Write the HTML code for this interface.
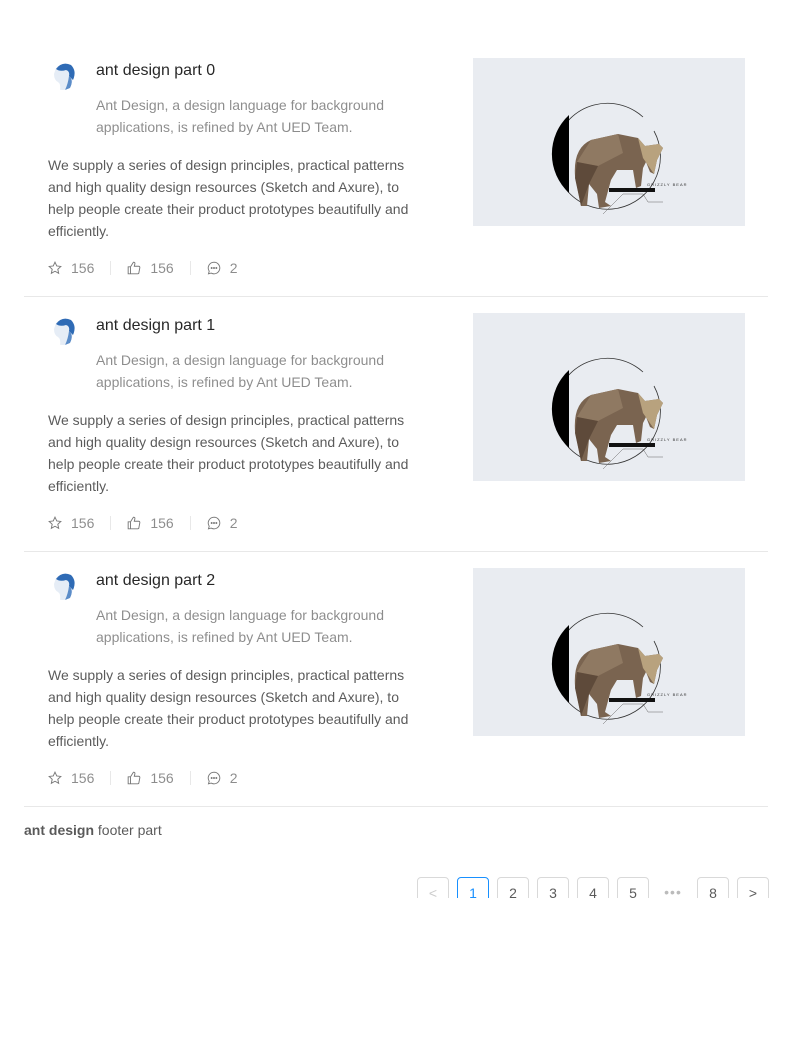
<!DOCTYPE html>
<html><head><meta charset="utf-8"><style>
*{margin:0;padding:0;box-sizing:border-box}
body{width:793px;height:1059px;background:#fff;font-family:"Liberation Sans",Helvetica,Arial,sans-serif;color:rgba(0,0,0,.65);font-size:14px;position:relative;overflow:hidden}
.item{position:absolute;left:24px;width:744px;height:255px;border-bottom:1px solid #e8e8e8}
.av{position:absolute;left:24px;top:18px;width:30px;height:30px;border-radius:50%;overflow:hidden;background:#fff}
.title{position:absolute;left:72px;top:17px;font-size:16px;color:rgba(0,0,0,.85);line-height:24px}
.desc{position:absolute;left:72px;top:52px;width:320px;color:rgba(0,0,0,.45);line-height:22px}
.content{position:absolute;left:24px;top:112px;width:370px;line-height:22px}
.acts{position:absolute;left:24px;top:215px;display:flex;align-items:center;color:rgba(0,0,0,.45);line-height:22px}
.acts span{display:flex;align-items:center;gap:9px}
.sep{width:1px;height:14px;background:#e8e8e8;margin:0 16px}
.img{position:absolute;left:449px;top:16px;width:272px;height:168px;background:#e9ecf1}
.footer{position:absolute;left:24px;top:819px;line-height:22px}
.pg{position:absolute;top:877px;height:21px;overflow:hidden;display:flex;gap:8px;left:417px}
.pg div{width:32px;height:32px;border:1px solid #d9d9d9;border-radius:4px;text-align:center;line-height:30px;color:rgba(0,0,0,.65)}
.pg .on{border-color:#1890ff;color:#1890ff}
.pg .dots{border:none;color:#bbb;letter-spacing:1px}
</style></head><body>
<svg width="0" height="0" style="position:absolute"><defs>
<g id="bear">
<path d="M181 73 A53 53 0 1 1 170 59" fill="none" stroke="#333" stroke-width="0.8"/>
<path d="M96 57 A53 53 0 0 0 96 135 Z" fill="#000"/>
<path d="M102 118 Q100 90 118 82 L145 76 L165 80 L172 88 L186 86 L190 90 L184 102 L181 116 L177 114 L173 104 L170 110 L168 128 L163 130 L160 112 L144 112 L138 122 L132 144 L138 148 L126 150 L124 136 L116 126 L114 148 L108 148 Z" fill="#7a6450"/>
<path d="M165 80 L172 88 L186 86 L190 90 L184 102 L181 116 L170 100 Z" fill="#b8a27e"/>
<path d="M118 82 L145 76 L150 95 L125 108 L104 104 Z" fill="#8f7962"/>
<path d="M104 104 L125 108 L116 126 L108 148 L102 120Z" fill="#5e4a3a"/>
<rect x="136" y="130" width="46" height="4" fill="#111"/>
<text x="174" y="128" font-size="4" fill="#333" font-family="Liberation Sans" letter-spacing="1">GRIZZLY BEAR</text>
<path d="M130 156 L150 136 L170 136 L175 144 L190 144" fill="none" stroke="#666" stroke-width="0.5"/>
</g>
<g id="face">
<rect width="30" height="30" fill="#fff"/>
<path d="M8 8 Q14 2 22 5 Q28 10 25 18 Q24 26 18 30 L12 30 Q13 24 10 22 Q6 20 6 14 Z" fill="#e6edf6"/>
<path d="M8 9 Q14 1 23 5 Q29 11 25 20 L21 16 Q22 11 18 10 Q12 12 8 9Z" fill="#2f6bb5"/>
<path d="M21 16 Q26 20 22 28 L17 30 Q20 24 21 16Z" fill="#5b8cc8"/>
</g></defs></svg>

<div class="item" style="top:42px">
<div class="av"><svg width="30" height="30"><use href="#face"/></svg></div><div class="title">ant design part 0</div>
<div class="desc">Ant Design, a design language for background applications, is refined by Ant UED Team.</div>
<div class="content">We supply a series of design principles, practical patterns and high quality design resources (Sketch and Axure), to help people create their product prototypes beautifully and efficiently.</div>
<div class="acts"><span><svg width="14" height="14" viewBox="0 0 24 24" fill="none" stroke="#777" stroke-width="1.6"><path d="M12 2l3 6.5 7 .8-5.2 4.8 1.5 7L12 17.6 5.7 21.1l1.5-7L2 9.3l7-.8z"/></svg>156</span><i class="sep"></i><span><svg width="14" height="14" viewBox="0 0 24 24" fill="none" stroke="#777" stroke-width="1.6"><path d="M2 10h4v12H2zM6 10l5-8c2 0 3 1 2.5 3L12.5 9H20a2 2 0 0 1 2 2.4l-1.6 8.6A2 2 0 0 1 18.4 22H6"/></svg>156</span><i class="sep"></i><span><svg width="14" height="14" viewBox="0 0 24 24" fill="none" stroke="#777" stroke-width="1.6"><path d="M12 2a10 10 0 1 1-5 18.7L2.5 22l1.3-4.5A10 10 0 0 1 12 2z"/><circle cx="8" cy="12" r=".9" fill="#777"/><circle cx="12" cy="12" r=".9" fill="#777"/><circle cx="16" cy="12" r=".9" fill="#777"/></svg>2</span></div>
<div class="img"><svg width="272" height="168"><use href="#bear"/></svg></div>
</div>

<div class="item" style="top:297px">
<div class="av"><svg width="30" height="30"><use href="#face"/></svg></div><div class="title">ant design part 1</div>
<div class="desc">Ant Design, a design language for background applications, is refined by Ant UED Team.</div>
<div class="content">We supply a series of design principles, practical patterns and high quality design resources (Sketch and Axure), to help people create their product prototypes beautifully and efficiently.</div>
<div class="acts"><span><svg width="14" height="14" viewBox="0 0 24 24" fill="none" stroke="#777" stroke-width="1.6"><path d="M12 2l3 6.5 7 .8-5.2 4.8 1.5 7L12 17.6 5.7 21.1l1.5-7L2 9.3l7-.8z"/></svg>156</span><i class="sep"></i><span><svg width="14" height="14" viewBox="0 0 24 24" fill="none" stroke="#777" stroke-width="1.6"><path d="M2 10h4v12H2zM6 10l5-8c2 0 3 1 2.5 3L12.5 9H20a2 2 0 0 1 2 2.4l-1.6 8.6A2 2 0 0 1 18.4 22H6"/></svg>156</span><i class="sep"></i><span><svg width="14" height="14" viewBox="0 0 24 24" fill="none" stroke="#777" stroke-width="1.6"><path d="M12 2a10 10 0 1 1-5 18.7L2.5 22l1.3-4.5A10 10 0 0 1 12 2z"/><circle cx="8" cy="12" r=".9" fill="#777"/><circle cx="12" cy="12" r=".9" fill="#777"/><circle cx="16" cy="12" r=".9" fill="#777"/></svg>2</span></div>
<div class="img"><svg width="272" height="168"><use href="#bear"/></svg></div>
</div>

<div class="item" style="top:552px">
<div class="av"><svg width="30" height="30"><use href="#face"/></svg></div><div class="title">ant design part 2</div>
<div class="desc">Ant Design, a design language for background applications, is refined by Ant UED Team.</div>
<div class="content">We supply a series of design principles, practical patterns and high quality design resources (Sketch and Axure), to help people create their product prototypes beautifully and efficiently.</div>
<div class="acts"><span><svg width="14" height="14" viewBox="0 0 24 24" fill="none" stroke="#777" stroke-width="1.6"><path d="M12 2l3 6.5 7 .8-5.2 4.8 1.5 7L12 17.6 5.7 21.1l1.5-7L2 9.3l7-.8z"/></svg>156</span><i class="sep"></i><span><svg width="14" height="14" viewBox="0 0 24 24" fill="none" stroke="#777" stroke-width="1.6"><path d="M2 10h4v12H2zM6 10l5-8c2 0 3 1 2.5 3L12.5 9H20a2 2 0 0 1 2 2.4l-1.6 8.6A2 2 0 0 1 18.4 22H6"/></svg>156</span><i class="sep"></i><span><svg width="14" height="14" viewBox="0 0 24 24" fill="none" stroke="#777" stroke-width="1.6"><path d="M12 2a10 10 0 1 1-5 18.7L2.5 22l1.3-4.5A10 10 0 0 1 12 2z"/><circle cx="8" cy="12" r=".9" fill="#777"/><circle cx="12" cy="12" r=".9" fill="#777"/><circle cx="16" cy="12" r=".9" fill="#777"/></svg>2</span></div>
<div class="img"><svg width="272" height="168"><use href="#bear"/></svg></div>
</div>

<div class="footer"><b>ant design</b> footer part</div>
<div class="pg"><div style="color:#ccc">&lt;</div><div class="on">1</div><div>2</div><div>3</div><div>4</div><div>5</div><div class="dots">•••</div><div>8</div><div>&gt;</div></div>
</body></html>
